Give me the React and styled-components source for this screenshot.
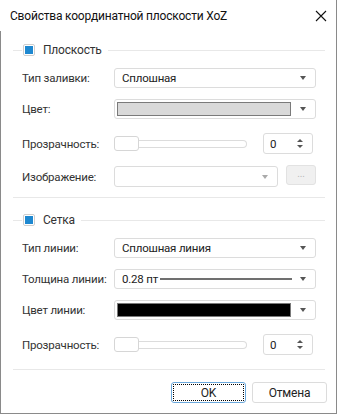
import React from "react";
import styled, { createGlobalStyle } from "styled-components";

const Global = createGlobalStyle`
  html, body { margin: 0; padding: 0; background: #fff; }
  body { font-family: Roboto, "Noto Sans", sans-serif; }
`;

const Dialog = styled.div`
  width: 337px;
  height: 414px;
  box-sizing: border-box;
  background: #fff;
  border-right: 1px solid #8a8a8a;
  border-bottom: 1px solid #8a8a8a;
  display: flex;
  flex-direction: column;
  font-size: 11.5px;
  letter-spacing: -0.2px;
  color: #333;
`;

const TitleBar = styled.div`
  height: 31px;
  display: flex;
  align-items: center;
  justify-content: space-between;
  padding: 0 9px 0 10px;
  color: #111;
  font-size: 12px;
  letter-spacing: -0.2px;
`;

const Body = styled.div`
  flex: 1;
  border-left: 1px solid #8a8a8a;
  display: flex;
  flex-direction: column;
`;

const SectionHead = styled.div`
  display: flex;
  align-items: center;
  height: 14px;
  margin-top: ${(p) => p.top}px;
  padding: 0 11px 0 12px;
  font-size: 12px;
  color: #333;
`;

const HeadLine = styled.div`
  height: 1px;
  background: #e8e8e8;
  width: ${(p) => (p.w ? `${p.w}px` : "auto")};
  flex: ${(p) => (p.w ? "none" : 1)};
`;

const Check = styled.span`
  width: 10px;
  height: 10px;
  border: 1px solid #cfcfcf;
  border-radius: 2px;
  margin: 0 8px 0 1px;
  display: flex;
  align-items: center;
  justify-content: center;
  &::after {
    content: "";
    width: 8px;
    height: 8px;
    background: #1e88d0;
  }
`;

const HeadText = styled.span`
  margin-right: 6px;
`;

const Row = styled.div`
  display: flex;
  align-items: center;
  height: ${(p) => p.h || 20}px;
  margin-top: ${(p) => p.top}px;
  padding-left: 21px;
`;

const Label = styled.div`
  width: 92px;
  flex: none;
  color: #333;
  white-space: nowrap;
`;

const Field = styled.div`
  box-sizing: border-box;
  width: ${(p) => p.w || 202}px;
  height: ${(p) => p.h || 20}px;
  border: 1px solid #dcdcdc;
  border-radius: 3px;
  display: flex;
  align-items: center;
  padding: 0 9px 0 7px;
  color: #222;
`;

const FieldText = styled.span`
  flex: 1;
  white-space: nowrap;
`;

const Arrow = styled.span`
  width: 0;
  height: 0;
  border-left: 3.5px solid transparent;
  border-right: 3.5px solid transparent;
  border-top: 4px solid ${(p) => (p.dim ? "#aaa" : "#555")};
  flex: none;
`;

const Swatch = styled.div`
  flex: 1;
  height: 14px;
  box-sizing: border-box;
  margin-left: -5px;
  margin-right: 9px;
  background: ${(p) => p.color};
  border: 1px solid #7a7a7a;
`;

const Slider = styled.div`
  width: 133px;
  display: flex;
  align-items: center;
`;

const Thumb = styled.div`
  width: 25px;
  height: 15px;
  box-sizing: border-box;
  border: 1px solid #d6d6d6;
  border-radius: 3px;
  background: #fff;
  flex: none;
`;

const Track = styled.div`
  flex: 1;
  height: 8px;
  box-sizing: border-box;
  border: 1px solid #dcdcdc;
  border-left: none;
  border-radius: 0 4px 4px 0;
`;

const Spin = styled.div`
  box-sizing: border-box;
  width: 50px;
  height: 21px;
  margin-left: 16px;
  border: 1px solid #dcdcdc;
  border-radius: 3px;
  display: flex;
  align-items: center;
  padding: 0 9px 0 6px;
  color: #222;
`;

const SpinArrows = styled.span`
  display: flex;
  flex-direction: column;
  gap: 3px;
  &::before, &::after {
    content: "";
    width: 0;
    height: 0;
    border-left: 3px solid transparent;
    border-right: 3px solid transparent;
  }
  &::before { border-bottom: 3px solid #555; }
  &::after { border-top: 3px solid #555; }
`;

const SmallButton = styled.div`
  box-sizing: border-box;
  width: 30px;
  height: 20px;
  margin-left: 8px;
  margin-top: -4px;
  background: #f0f0f0;
  border: 1px solid #e2e2e2;
  border-radius: 3px;
  color: #b8b8b8;
  font-size: 10px;
  display: flex;
  align-items: center;
  justify-content: center;
  padding-bottom: 2px;
`;

const Weight = styled.div`
  flex: 1;
  height: 2px;
  background: #707070;
  margin: 0 8px 0 2px;
`;

const Separator = styled.div`
  height: 1px;
  background: #e8e8e8;
  margin: ${(p) => p.top}px 11px 0 12px;
`;

const Footer = styled.div`
  display: flex;
  justify-content: flex-end;
  gap: 6px;
  margin-top: 12px;
  padding-right: 9px;
`;

const Button = styled.button`
  box-sizing: border-box;
  width: 75px;
  height: 21px;
  font-family: inherit;
  font-size: 12px;
  letter-spacing: -0.2px;
  color: #222;
  background: #fff;
  border: 1px solid ${(p) => (p.primary ? "#6aa8dc" : "#dcdcdc")};
  border-radius: 3px;
  outline: ${(p) => (p.primary ? "1px dotted #000" : "none")};
  outline-offset: -3px;
  padding: 0;
`;

function CloseIcon() {
  return (
    <svg width="12" height="12" viewBox="0 0 12 12">
      <path d="M1 1L11 11M11 1L1 11" stroke="#111" strokeWidth="1.1" />
    </svg>
  );
}

function Opacity({ top }) {
  return (
    <Row top={top} h={21}>
      <Label>Прозрачность:</Label>
      <Slider>
        <Thumb />
        <Track />
      </Slider>
      <Spin>
        <FieldText>0</FieldText>
        <SpinArrows />
      </Spin>
    </Row>
  );
}

export default function App() {
  return (
    <>
      <Global />
      <Dialog>
        <TitleBar>
          <span>Свойства координатной плоскости XoZ</span>
          <CloseIcon />
        </TitleBar>
        <Body>
          <SectionHead top={12}>
            <HeadLine w={9} />
            <Check />
            <HeadText>Плоскость</HeadText>
            <HeadLine />
          </SectionHead>
          <Row top={11}>
            <Label>Тип заливки:</Label>
            <Field>
              <FieldText>Сплошная</FieldText>
              <Arrow />
            </Field>
          </Row>
          <Row top={11}>
            <Label>Цвет:</Label>
            <Field>
              <Swatch color="#d9d9d9" />
              <Arrow />
            </Field>
          </Row>
          <Opacity top={14} />
          <Row top={12} h={21}>
            <Label>Изображение:</Label>
            <Field w={164} h={21}>
              <FieldText />
              <Arrow dim />
            </Field>
            <SmallButton>...</SmallButton>
          </Row>
          <Separator top={10} />
          <SectionHead top={15}>
            <HeadLine w={9} />
            <Check />
            <HeadText>Сетка</HeadText>
            <HeadLine />
          </SectionHead>
          <Row top={11}>
            <Label>Тип линии:</Label>
            <Field>
              <FieldText>Сплошная линия</FieldText>
              <Arrow />
            </Field>
          </Row>
          <Row top={11}>
            <Label>Толщина линии:</Label>
            <Field>
              <span>0.28 пт</span>
              <Weight />
              <Arrow />
            </Field>
          </Row>
          <Row top={11}>
            <Label>Цвет линии:</Label>
            <Field>
              <Swatch color="#000" />
              <Arrow />
            </Field>
          </Row>
          <Opacity top={14} />
          <Separator top={14} />
          <Footer>
            <Button primary>OK</Button>
            <Button>Отмена</Button>
          </Footer>
        </Body>
      </Dialog>
    </>
  );
}
